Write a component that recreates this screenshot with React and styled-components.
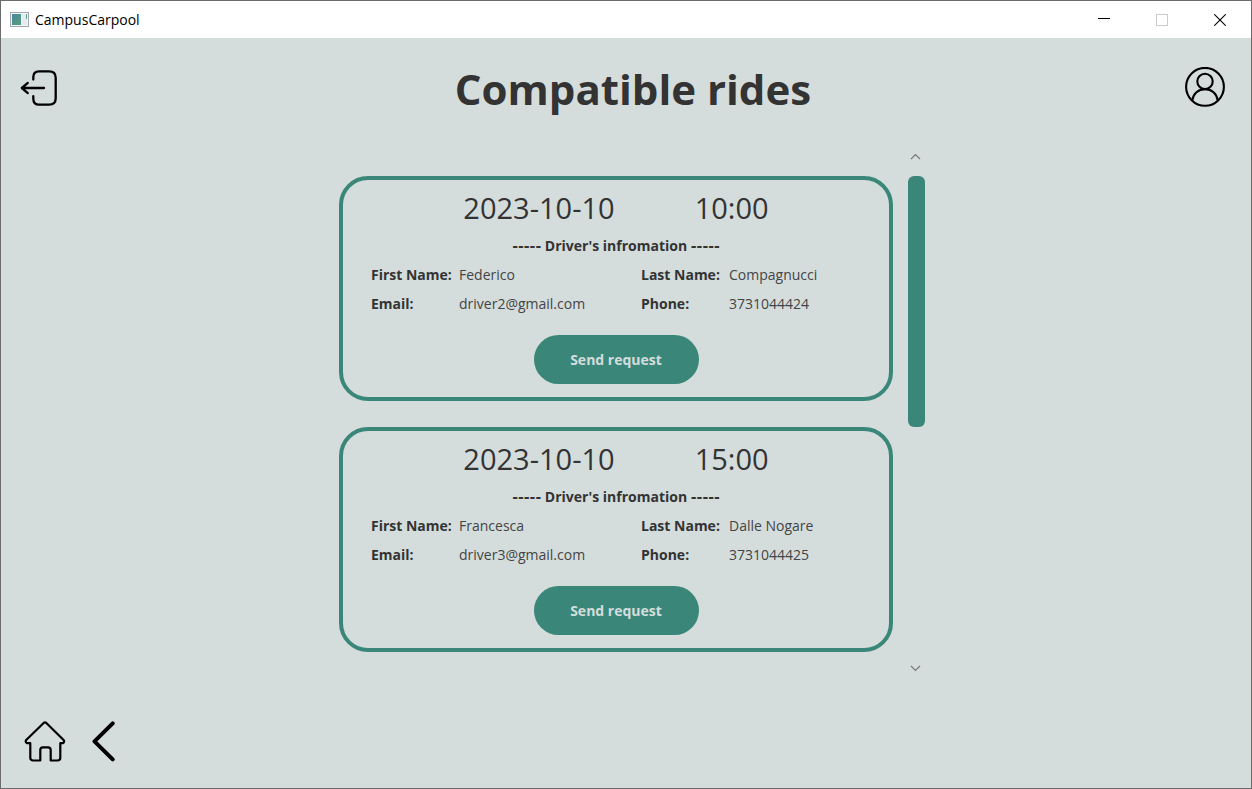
import React from "react";
import styled, { createGlobalStyle } from "styled-components";

const GlobalStyle = createGlobalStyle`
  *, *::before, *::after { box-sizing: border-box; }
  body {
    margin: 0;
    background: #d4dddc;
    color: #333333;
    font-family: "Open Sans", "Noto Sans", sans-serif;
    font-size: 14px;
  }
  button {
    margin: 0;
    padding: 0;
    border: 0;
    background: none;
    color: inherit;
    font: inherit;
    cursor: pointer;
  }
  svg { display: block; }
`;

const Window = styled.div`
  display: flex;
  flex-direction: column;
  min-height: 100vh;
  border: 1px solid #6b6b6b;
`;

const TitleBar = styled.div`
  display: flex;
  align-items: center;
  height: 37px;
  padding: 0 2px 0 9px;
  background: #ffffff;
  color: #000000;
`;

const AppName = styled.span`
  flex: 1;
  margin-left: 6px;
  line-height: 20px;
`;

const WindowButton = styled.button`
  display: grid;
  place-items: center;
  width: 58px;
  height: 36px;
  color: ${(p) => (p.disabled ? "#cccccc" : "#000000")};
`;

const Header = styled.header`
  display: grid;
  grid-template-columns: 80px 1fr 66px;
  align-items: center;
  height: 108px;
  padding-bottom: 10px;
`;

const Title = styled.h1`
  margin: 0;
  padding-top: 4px;
  font-size: 42px;
  font-weight: 700;
  line-height: 60px;
  text-align: center;
`;

const IconButton = styled.button`
  display: grid;
  place-items: center;
  width: 40px;
  height: 40px;
`;

const LeftSlot = styled.div`
  padding-left: 18px;
`;

const Main = styled.main`
  display: flex;
  flex: 1;
  justify-content: center;
  align-items: flex-start;
  gap: 15px;
  padding: 0 68px 0 80px;
`;

const RideList = styled.ul`
  display: flex;
  flex: 0 1 554px;
  flex-direction: column;
  gap: 26px;
  margin: 0;
  padding: 30px 0 0;
  list-style: none;
`;

const Card = styled.li`
  display: flex;
  flex-direction: column;
  align-items: center;
  padding: 8px 28px 13px;
  border: 4px solid #3a877a;
  border-radius: 29px;
`;

const When = styled.div`
  display: flex;
  gap: 80px;
  margin-bottom: 4px;
  font-size: 29px;
  line-height: 40px;
`;

const SectionTitle = styled.h2`
  margin: 0;
  font-size: 14px;
  font-weight: 700;
  line-height: 28px;
`;

const Dashes = styled.span`
  font-family: "DejaVu Sans", sans-serif;
  line-height: 1;
`;

const Details = styled.dl`
  display: grid;
  grid-template-columns: 88px 182px 88px 1fr;
  align-self: stretch;
  margin: 0 0 17px;
  line-height: 29px;
`;

const Term = styled.dt`
  font-weight: 700;
  white-space: nowrap;
`;

const Value = styled.dd`
  margin: 0;
  color: #444444;
`;

const RequestButton = styled.button`
  width: 165px;
  height: 49px;
  border-radius: 25px;
  background: #3a877a;
  color: #d4dddc;
  font-weight: 700;
`;

const ScrollBar = styled.div`
  display: flex;
  flex-direction: column;
  align-self: stretch;
  align-items: center;
  width: 17px;
`;

const ScrollButton = styled.button`
  display: grid;
  place-items: center;
  width: 17px;
  height: 20px;
  padding-right: 2px;
  color: #777777;
`;

const Track = styled.div`
  flex: 1;
  width: 17px;
  padding-top: 10px;
`;

const Thumb = styled.div`
  height: 251px;
  border-radius: 6px;
  background: #3a877a;
`;

const Footer = styled.footer`
  display: flex;
  gap: 20px;
  padding: 43px 23px 27px;
`;

const rides = [
  {
    date: "2023-10-10",
    time: "10:00",
    firstName: "Federico",
    lastName: "Compagnucci",
    email: "driver2@gmail.com",
    phone: "3731044424",
  },
  {
    date: "2023-10-10",
    time: "15:00",
    firstName: "Francesca",
    lastName: "Dalle Nogare",
    email: "driver3@gmail.com",
    phone: "3731044425",
  },
];

const AppIcon = () => (
  <svg width="19" height="15" viewBox="0 0 19 15" aria-hidden="true">
    <defs>
      <linearGradient id="appPane" x1="0" y1="0" x2="1" y2="1">
        <stop offset="0" stopColor="#4a86a0" />
        <stop offset="1" stopColor="#55a07a" />
      </linearGradient>
    </defs>
    <rect x="0.5" y="0.5" width="18" height="14" fill="#f4f5f6" stroke="#a2a8ae" />
    <rect x="2" y="2" width="9" height="11" fill="url(#appPane)" />
    <rect x="12" y="2" width="5" height="11" fill="#e6ebf2" />
    <path d="M16.5 2v5" stroke="#5ba684" />
  </svg>
);

const MinimizeIcon = () => (
  <svg width="12" height="12" viewBox="0 0 12 12" stroke="currentColor">
    <path d="M0 4.5h12" />
  </svg>
);

const MaximizeIcon = () => (
  <svg width="12" height="12" viewBox="0 0 12 12" fill="none" stroke="currentColor">
    <rect x="0.5" y="0.5" width="11" height="11" />
  </svg>
);

const CloseIcon = () => (
  <svg width="12" height="12" viewBox="0 0 12 12" stroke="currentColor" strokeWidth="1.1">
    <path d="M0.3 0.3l11.4 11.4M11.7 0.3L0.3 11.7" />
  </svg>
);

const LogoutIcon = () => (
  <svg
    width="40"
    height="40"
    viewBox="0 0 40 40"
    fill="none"
    stroke="#000"
    strokeWidth="2.3"
    strokeLinecap="round"
    strokeLinejoin="round"
  >
    <path d="M14.3 12.6V10.3C14.3 6.3 16.5 4.4 20 4.4h10c4.5 0 6.7 2.2 6.7 6.3v20.6c0 4.3-2.2 6.4-6.7 6.4H20c-3.6 0-5.7-2-5.7-6.2v-2.3" />
    <path d="M25 21H2.8M8.8 15.9l-6 5.1 6 5.1" />
  </svg>
);

const ProfileIcon = () => (
  <svg width="40" height="40" viewBox="0 0 40 40" fill="none" stroke="#000" strokeWidth="2.1">
    <circle cx="20" cy="19.8" r="18.9" />
    <circle cx="20" cy="14.4" r="7.7" />
    <path d="M7.3 33.3c0.8-6.4 6-11.2 12.7-11.2s11.9 4.8 12.7 11.2" />
  </svg>
);

const HomeIcon = () => (
  <svg
    width="42"
    height="42"
    viewBox="0 0 42 42"
    fill="none"
    stroke="#000"
    strokeWidth="2.2"
    strokeLinejoin="round"
  >
    <path d="M19.4 2.2c0.9-0.9 2.3-0.9 3.2 0L39.6 19c0.9 1.3 0.6 2.4-0.6 3.2h-2.7v14.6c0 1.8-0.9 2.7-2.7 2.7h-6.9V29c0-1.8-0.8-2.7-2.6-2.7h-5.3c-1.7 0-2.5 0.9-2.5 2.7v10.5H9.2c-1.9 0-2.9-0.9-2.9-2.8V22.2H3.1c-1.5-0.8-1.8-2-0.9-3.2z" />
  </svg>
);

const BackIcon = () => (
  <svg
    width="36"
    height="42"
    viewBox="0 0 36 42"
    fill="none"
    stroke="#000"
    strokeWidth="4"
    strokeLinecap="round"
    strokeLinejoin="round"
  >
    <path d="M26.7 2.3L8.5 20.3l18.2 18" />
  </svg>
);

const ArrowIcon = ({ down }) => (
  <svg width="11" height="7" viewBox="0 0 11 7" fill="none" stroke="currentColor" strokeWidth="1.2">
    <path d={down ? "M1 1l4.5 4.5L10 1" : "M1 6l4.5-4.5L10 6"} />
  </svg>
);

function RideCard({ ride }) {
  return (
    <Card>
      <When>
        <time>{ride.date}</time>
        <time>{ride.time}</time>
      </When>
      <SectionTitle>
        <Dashes>-----</Dashes> Driver's infromation <Dashes>-----</Dashes>
      </SectionTitle>
      <Details>
        <Term>First Name:</Term>
        <Value>{ride.firstName}</Value>
        <Term>Last Name:</Term>
        <Value>{ride.lastName}</Value>
        <Term>Email:</Term>
        <Value>{ride.email}</Value>
        <Term>Phone:</Term>
        <Value>{ride.phone}</Value>
      </Details>
      <RequestButton type="button">Send request</RequestButton>
    </Card>
  );
}

export default function App() {
  return (
    <>
      <GlobalStyle />
      <Window>
        <TitleBar>
          <AppIcon />
          <AppName>CampusCarpool</AppName>
          <WindowButton type="button" aria-label="Minimize">
            <MinimizeIcon />
          </WindowButton>
          <WindowButton type="button" aria-label="Maximize" disabled>
            <MaximizeIcon />
          </WindowButton>
          <WindowButton type="button" aria-label="Close">
            <CloseIcon />
          </WindowButton>
        </TitleBar>
        <Header>
          <LeftSlot>
            <IconButton type="button" aria-label="Log out">
              <LogoutIcon />
            </IconButton>
          </LeftSlot>
          <Title>Compatible rides</Title>
          <IconButton type="button" aria-label="Profile">
            <ProfileIcon />
          </IconButton>
        </Header>
        <Main>
          <RideList>
            {rides.map((ride) => (
              <RideCard key={ride.email} ride={ride} />
            ))}
          </RideList>
          <ScrollBar>
            <ScrollButton type="button" aria-label="Scroll up">
              <ArrowIcon />
            </ScrollButton>
            <Track>
              <Thumb />
            </Track>
            <ScrollButton type="button" aria-label="Scroll down">
              <ArrowIcon down />
            </ScrollButton>
          </ScrollBar>
        </Main>
        <Footer>
          <IconButton type="button" aria-label="Home">
            <HomeIcon />
          </IconButton>
          <IconButton type="button" aria-label="Back">
            <BackIcon />
          </IconButton>
        </Footer>
      </Window>
    </>
  );
}
